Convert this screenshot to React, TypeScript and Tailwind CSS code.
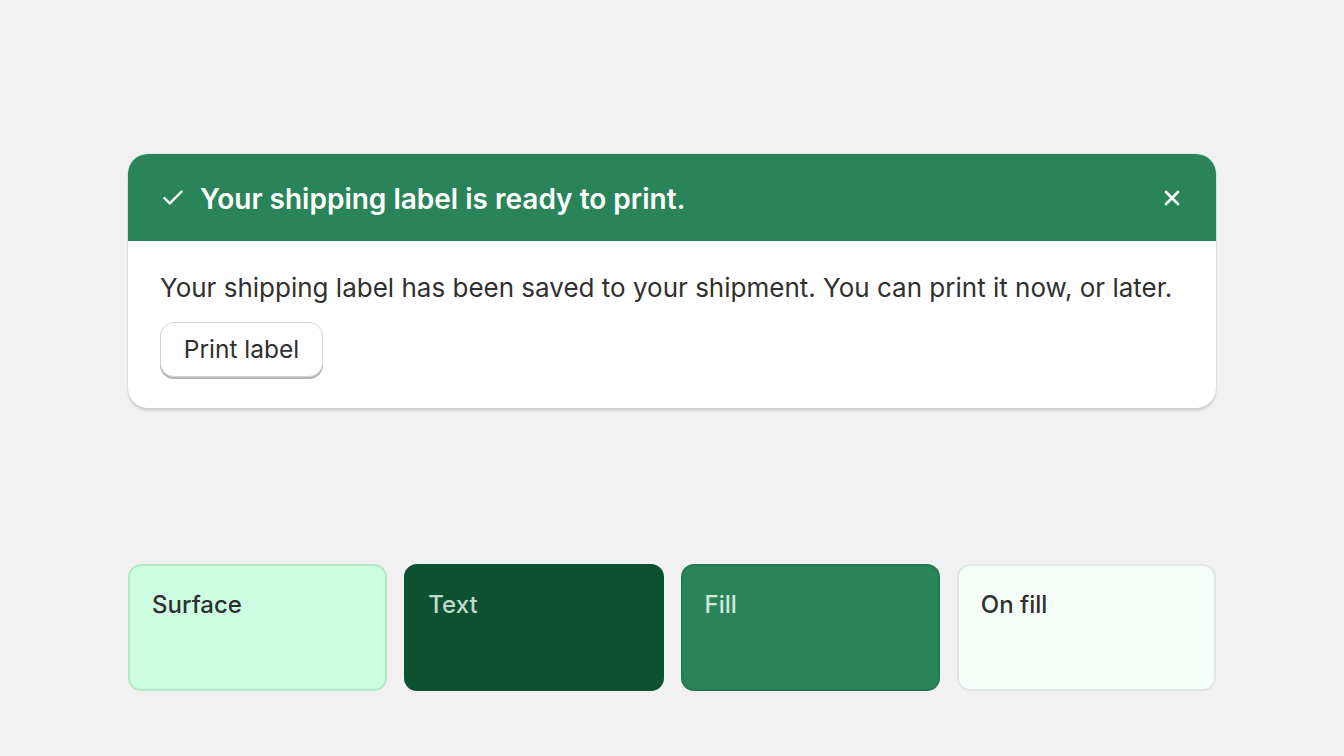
import { Check, X } from "lucide-react";

const swatches = [
  { label: "Surface", box: "bg-[#cdfee1] border-[#b4e8c9]", text: "text-[#303030]" },
  { label: "Text", box: "bg-[#0c5132] border-[#0c5132]", text: "text-[#c4d9cd]" },
  { label: "Fill", box: "bg-[#29845a] border-[#237a52]", text: "text-[#d2e8dc]" },
  { label: "On fill", box: "bg-[#f5fdf8] border-[#e1e5e3]", text: "text-[#303030]" },
];

export default function App() {
  return (
    <div className="min-h-screen w-full bg-[#f1f1f1] font-['Inter',sans-serif]">
      <div className="px-[128px] pt-[154px]">
        {/* Banner */}
        <div className="rounded-[20px] bg-white shadow-[0_3px_2px_rgba(0,0,0,0.12),0_0_0_1px_rgba(0,0,0,0.04)] overflow-hidden">
          <div className="flex h-[87px] items-center justify-between bg-[#29845a] px-[32px]">
            <div className="flex items-center gap-[14px] text-white">
              <Check className="h-[26px] w-[26px]" strokeWidth={2.2} />
              <span className="mt-[2px] text-[28px] font-semibold text-white">
                Your shipping label is ready to print.
              </span>
            </div>
            <X className="h-[24px] w-[24px] text-white" strokeWidth={2.6} />
          </div>
          <div className="px-[32px] pt-[31px] pb-[31px]">
            <p className="text-[26px] leading-[32px] text-[#303030]">
              Your shipping label has been saved to your shipment. You can print it now, or later.
            </p>
            <button className="mt-[18px] h-[55px] w-[163px] rounded-[14px] border border-[#d4d4d4] bg-white text-[24.5px] text-[#303030] shadow-[0_2px_0_#b5b5b5]">
              Print label
            </button>
          </div>
        </div>

        {/* Swatches */}
        <div className="mt-[156px] grid grid-cols-4 gap-[17px]">
          {swatches.map((s) => (
            <div
              key={s.label}
              className={`h-[127px] rounded-[13px] border-2 px-[22px] pt-[21px] ${s.box}`}
            >
              <span className={`text-[24px] font-medium ${s.text}`}>{s.label}</span>
            </div>
          ))}
        </div>
      </div>
    </div>
  );
}
